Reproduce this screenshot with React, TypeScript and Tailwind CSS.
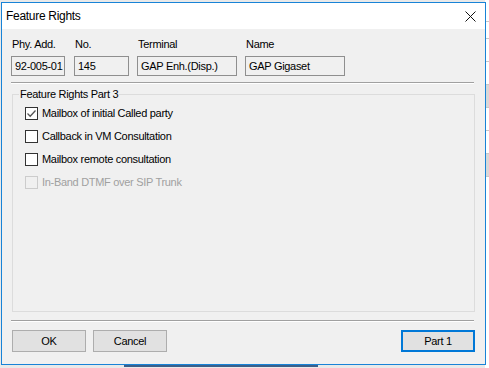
const rows = [
  { label: 'Mailbox of initial Called party', checked: true, disabled: false },
  { label: 'Callback in VM Consultation', checked: false, disabled: false },
  { label: 'Mailbox remote consultation', checked: false, disabled: false },
  { label: 'In-Band DTMF over SIP Trunk', checked: false, disabled: true },
];

const fields = [
  { label: 'Phy. Add.', value: '92-005-01', w: 'w-[54px]', gap: 'mr-[9px]' },
  { label: 'No.', value: '145', w: 'w-[55px]', gap: 'mr-[8px]' },
  { label: 'Terminal', value: 'GAP Enh.(Disp.)', w: 'w-[100px]', gap: 'mr-[8px]' },
  { label: 'Name', value: 'GAP Gigaset', w: 'w-[100px]', gap: '' },
];

function CheckBox({ checked, disabled }: { checked: boolean; disabled: boolean }) {
  return (
    <div
      className={`w-[13px] h-[13px] border flex items-center justify-center ${
        disabled ? 'border-[#cccccc] bg-[#f0f0f0]' : 'border-[#333333] bg-white'
      }`}
    >
      {checked && (
        <svg width="11" height="11" viewBox="0 0 11 11">
          <path d="M1.5 5.5 L4.2 8.2 L9.5 2.5" fill="none" stroke="#555" strokeWidth="1.3" />
        </svg>
      )}
    </div>
  );
}

export default function App() {
  return (
    <div
      className="relative w-[489px] h-[368px] overflow-hidden bg-[#e9e9e9] text-[11px] text-black"
      style={{ fontFamily: '"Liberation Sans", Arial, sans-serif' }}
    >
      {/* background app glimpses */}
      <div className="absolute right-0 top-0 w-[4px] h-full bg-white flex flex-col">
        <div className="h-[22px] border-b border-[#c8c8c8]"></div>
        <div className="h-[17px] border-b border-[#c8c8c8]"></div>
        <div className="h-[23px] border-b border-[#c8c8c8]"></div>
        <div className="h-[23px] border-b border-[#c8c8c8]"></div>
        <div className="h-[23px] border-b border-[#c8c8c8] bg-[#d8d8d8]"></div>
        <div className="h-[23px] border-b border-[#c8c8c8]"></div>
        <div className="h-[23px] border-b border-[#c8c8c8]"></div>
        <div className="h-[23px] border-b border-[#c8c8c8] bg-[#d8d8d8]"></div>
      </div>
      <div className="absolute left-[124px] top-[365px] w-[194px] h-[2px] bg-[#3b5f8a]"></div>

      {/* dialog window */}
      <div className="absolute left-[1px] top-[2px] w-[485px] h-[363px] border border-[#1883d7] bg-[#f0f0f0] flex flex-col">
        <div className="h-[26px] bg-white flex items-center justify-between pl-[4px] pr-[9px] shrink-0">
          <span className="text-[12px] tracking-[-0.3px]">Feature Rights</span>
          <svg width="11" height="11" viewBox="0 0 11 11">
            <path d="M0.5 0.5 L10.5 10.5 M10.5 0.5 L0.5 10.5" stroke="#111" strokeWidth="1" />
          </svg>
        </div>

        <div className="flex flex-col px-[9px] tracking-[-0.3px]">
          <div className="flex mt-[9px]">
            {fields.map((f) => (
              <div key={f.label} className={`flex flex-col ${f.gap}`}>
                <div className={`h-[13px] leading-[13px] pl-[1px] ${f.label === 'Name' ? 'pl-0' : ''}`}>{f.label}</div>
                <div
                  className={`${f.w} h-[20px] mt-[5px] border border-[#8f8f8f] bg-[#f0f0f0] flex items-center pl-[3px] leading-none`}
                >
                  {f.value}
                </div>
              </div>
            ))}
          </div>

          <div className="mt-[6px] w-[463px] border-t border-[#a0a0a0] border-b border-b-white"></div>

          <div className="relative mt-[10px] ml-[1px] w-[463px] h-[218px] border border-[#dcdcdc]">
            <div className="absolute -top-[7px] left-[6px] px-[1px] bg-[#f0f0f0] leading-[13px]">
              Feature Rights Part 3
            </div>
            <div className="flex flex-col gap-[10px] pt-[12px] pl-[12px]">
              {rows.map((r) => (
                <div key={r.label} className="flex items-center h-[13px]">
                  <CheckBox checked={r.checked} disabled={r.disabled} />
                  <span className={`ml-[4px] leading-[13px] ${r.disabled ? 'text-[#a0a0a0]' : ''}`}>{r.label}</span>
                </div>
              ))}
            </div>
          </div>

          <div className="mt-[8px] w-[463px] border-t border-[#a0a0a0] border-b border-b-white"></div>

          <div className="flex mt-[8px] ml-[1px] w-[463px]">
            <button className="w-[74px] h-[22px] bg-[#e1e1e1] border border-[#adadad] leading-none">OK</button>
            <button className="ml-[7px] w-[74px] h-[22px] bg-[#e1e1e1] border border-[#adadad] leading-none">Cancel</button>
            <button className="ml-auto w-[74px] h-[22px] bg-[#e1e1e1] border-2 border-[#0078d7] leading-none">Part 1</button>
          </div>
        </div>
      </div>
    </div>
  );
}
